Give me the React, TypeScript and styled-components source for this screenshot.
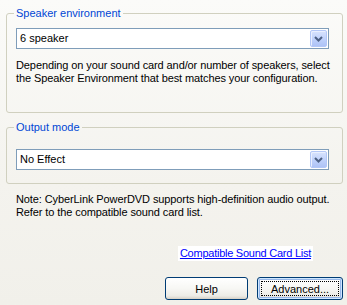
import * as React from "react"
import styled, { createGlobalStyle } from "styled-components"

const GlobalStyle = createGlobalStyle`
  html, body {
    margin: 0;
    padding: 0;
    background: #f4f3ee;
  }
  * {
    box-sizing: border-box;
  }
`

const AudioPage = () => {
  return (
    <>
      <GlobalStyle />
      <Page>
        <Group>
          <Legend>Speaker environment</Legend>
          <Combo top={8}>
            <ComboText>6 speaker</ComboText>
            <DropButton>
              <Chevron />
            </DropButton>
          </Combo>
          <Description>
            Depending on your sound card and/or number of speakers, select the Speaker Environment that best matches your configuration.
          </Description>
        </Group>

        <Group spaced bottom={13}>
          <Legend>Output mode</Legend>
          <Combo top={15}>
            <ComboText>No Effect</ComboText>
            <DropButton>
              <Chevron />
            </DropButton>
          </Combo>
        </Group>

        <Note>
          Note: CyberLink PowerDVD supports high-definition audio output. Refer to the compatible sound card list.
        </Note>

        <LinkRow>
          <SoundLink href="#">Compatible Sound Card List</SoundLink>
        </LinkRow>

        <ButtonRow>
          <XPButton width={83}>Help</XPButton>
          <XPButton width={86} isDefault>
            <FocusRect>Advanced...</FocusRect>
          </XPButton>
        </ButtonRow>
      </Page>
    </>
  )
}

export default AudioPage

const Chevron = () => (
  <svg width="9" height="6" viewBox="0 0 9 6">
    <polyline points="1,1 4.5,4.5 8,1" fill="none" stroke="#4d6185" strokeWidth="2" />
  </svg>
)

const Page = styled.div`
  width: 347px;
  height: 305px;
  padding: 7px 4px 0 6px;
  background: linear-gradient(180deg, #fbfbf9 0%, #f4f3ee 60%, #f1f0ea 100%);
  font-family: "Liberation Sans", Arial, sans-serif;
  font-size: 11px;
  color: #000;
  overflow: hidden;
`

const Group = styled.fieldset<{ spaced?: boolean; bottom?: number }>`
  margin: ${p => (p.spaced ? "8px" : "0")} 0 0 0;
  padding: 0 13px ${p => p.bottom ?? 27}px 9px;
  border: 1px solid #d0d0bf;
  border-radius: 3px;
  min-width: 0;
`

const Legend = styled.legend`
  margin-left: -2px;
  padding: 0 2px;
  font-size: 11px;
  line-height: 13px;
  color: #0046d5;
`

const Combo = styled.div<{ top: number }>`
  margin-top: ${p => p.top}px;
  height: 21px;
  border: 1px solid #7f9db9;
  background: #fff;
  display: flex;
  align-items: center;
  justify-content: space-between;
  padding: 0 1px 0 3px;
`

const ComboText = styled.span`
  line-height: 13px;
`

const DropButton = styled.div`
  width: 17px;
  height: 17px;
  display: flex;
  align-items: center;
  justify-content: center;
  border: 1px solid #b3c7f7;
  border-radius: 2px;
  background: linear-gradient(180deg, #d8e3fd 0%, #bfd1fb 55%, #aec3f6 100%);
  box-shadow: inset 1px 1px 0 #eaf0ff;
`

const Description = styled.p`
  margin: 10px -4px 0 0;
  line-height: 13px;
  letter-spacing: -0.1px;
`

const Note = styled.p`
  margin: 9px 0 0 0;
  padding-left: 10px;
  line-height: 13px;
  letter-spacing: -0.1px;
`

const LinkRow = styled.div`
  margin-top: 27px;
  display: flex;
  justify-content: flex-end;
  padding-right: 30px;
`

const SoundLink = styled.a`
  background: #fff;
  color: #0000ff;
  text-decoration: underline;
  padding: 1px 2px;
  line-height: 13px;
  letter-spacing: -0.25px;
`

const ButtonRow = styled.div`
  margin-top: 16px;
  display: flex;
  justify-content: flex-end;
  gap: 9px;
`

const XPButton = styled.button<{ width: number; isDefault?: boolean }>`
  width: ${p => p.width}px;
  height: 23px;
  padding: 0;
  border: 1px solid #003c74;
  border-radius: 3px;
  background: linear-gradient(180deg, #ffffff 0%, #f7f7f4 50%, #ecebe6 85%, #d6d0c5 100%);
  font-family: "Liberation Sans", Arial, sans-serif;
  font-size: 11px;
  color: #000;
  display: flex;
  align-items: center;
  justify-content: center;
  box-shadow: ${p => (p.isDefault ? "inset 0 0 0 1px #cee7ff, inset 0 0 0 2px #98b8ea" : "none")};
`

const FocusRect = styled.span`
  display: flex;
  align-items: center;
  justify-content: center;
  width: calc(100% - 6px);
  height: calc(100% - 6px);
  border: 1px dotted #000;
`
